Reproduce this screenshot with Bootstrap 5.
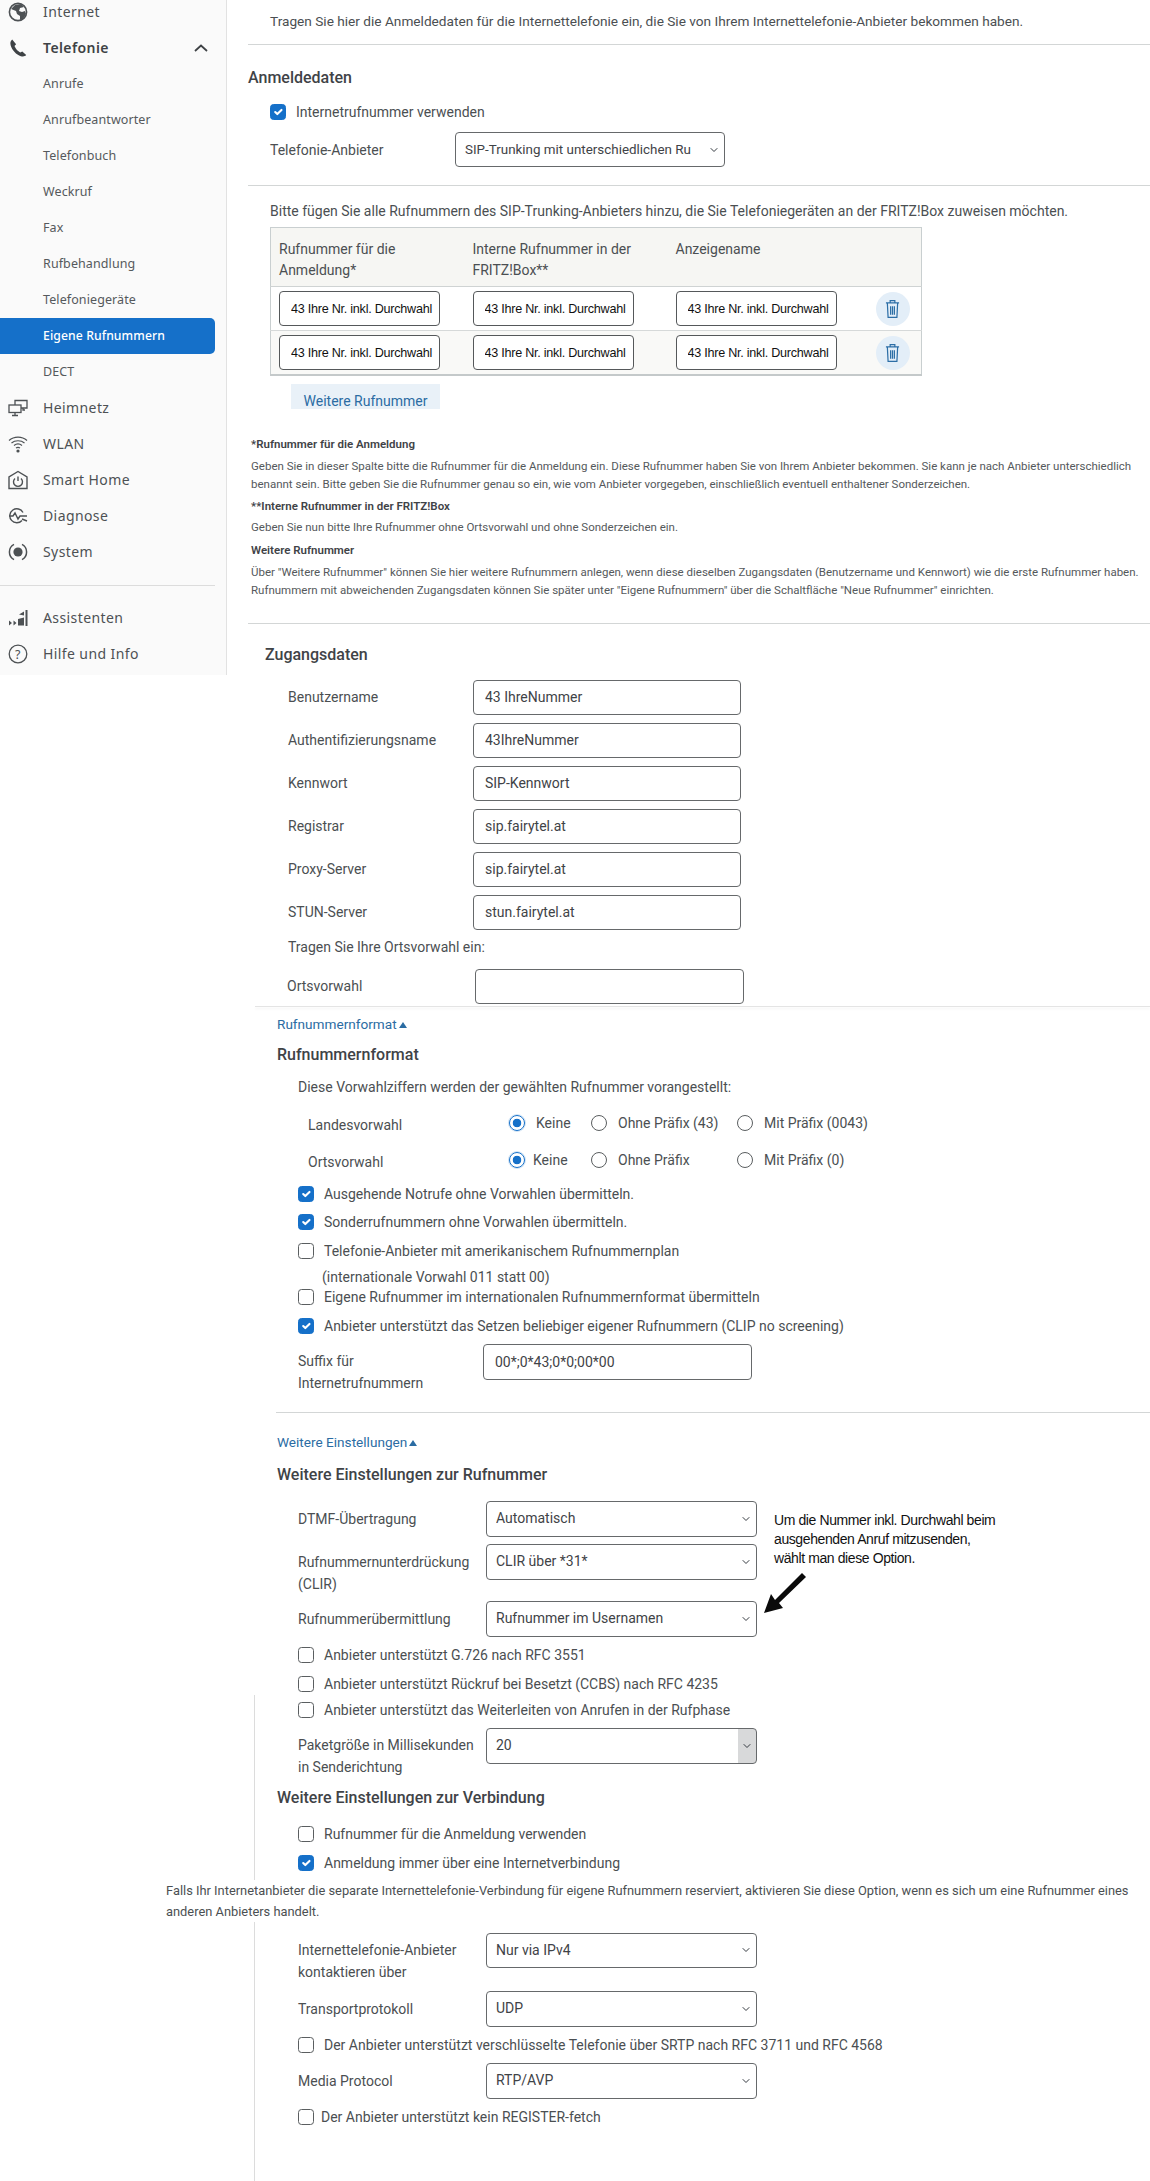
<!DOCTYPE html>
<html lang="de">
<head>
<meta charset="utf-8">
<title>Eigene Rufnummern</title>
<link href="https://cdn.jsdelivr.net/npm/bootstrap@5.3.0/dist/css/bootstrap.min.css" rel="stylesheet">
<style>
body{font-family:Roboto,"Noto Sans",sans-serif;font-size:14px;line-height:22px;color:#4b4f52;background:#fff;height:2181px;overflow:hidden}
/* sidebar */
.sidepane{width:227px;height:675px;flex:none;background:#fafafa;border-right:1px solid #e2e2e2;overflow:hidden;font-family:"Noto Sans",sans-serif}
.sidelist{margin-top:-6px}
.sideitem{height:36px;display:flex;align-items:center;width:215px;color:#55595c;font-size:12.5px;padding-left:43px;letter-spacing:.1px;text-decoration:none}
.sideitem.top{font-size:14px;padding-left:8px;letter-spacing:.4px;color:#4d5154}
.sideitem.top svg{width:20px;height:20px;margin-right:15px;flex:none}
.sideitem.open{font-weight:600;color:#3e4245}
.sideitem.act{background:#1570c9;color:#fff;font-weight:500;font-size:12.2px;border-radius:0 5px 5px 0}
.chev{width:14px!important;height:8px!important;margin:0 7px 0 auto!important}
.siderule{margin:15px 0 14px;width:215px;border:0;border-top:1px solid #dcdcdc;opacity:1}
/* main */
.mainpane{flex:1;min-width:0;position:relative}
.rule{border:0;border-top:1px solid #d3d6d6;opacity:1;margin-bottom:0}
.rule.soft{box-shadow:0 2px 3px rgba(0,0,0,.07);border-top-color:#e4e4e4}
.head{font-weight:500;font-size:16px;color:#3f4347;line-height:22px}
.linkish{color:#2b6ca3;line-height:22px;text-decoration:none;display:block;font-size:13.6px}
.linkish i{display:inline-block;width:0;height:0;margin-left:2px;vertical-align:1px;border-left:4px solid transparent;border-right:4px solid transparent;border-bottom:6px solid #2b6ca3}
.rowline{display:flex;align-items:center;height:22px;white-space:nowrap}
.rowline .form-check-input{flex:none;margin:0 10px 0 0}
.rowline.tightlab .form-check-input{margin-right:7px}
.plain{white-space:nowrap}
.intro{font-size:13.65px}
.h20{height:20px}
.form-check-input{width:16px;height:16px;border:1px solid #5a5e60;border-radius:3px;background-color:#fff}
.form-check-input:checked{background-color:#1570c9;border-color:#1570c9}
.form-check-input[type=radio]{border-radius:50%}
.form-check-input[type=radio]:checked{background:radial-gradient(circle,#1570c9 0 4px,#fff 4.6px);border-color:#1570c9;box-shadow:0 0 0 1px #cfe2f4}
.fld{height:35px;border:1px solid #66696b;border-radius:4px;font-size:14px;color:#3f4347;padding:0 11px;line-height:33px;flex:none;box-shadow:none}
.fld.tall{height:36px}
.form-select.fld{padding:0 20px 0 9px;background-size:8px 8px;background-position:right 6px center}
.form-select.fld.narrowtext{font-size:13.4px}
.form-select.greyend{background-image:var(--bs-form-select-bg-img),linear-gradient(#d8d9da,#d8d9da);background-size:8px 8px,18px 100%;background-position:right 5px center,right center;background-repeat:no-repeat}
.flabel{flex:none}
.formrow{display:flex;align-items:center}
.formrow.topal{align-items:flex-start}
.w185{width:185px}.w188{width:188px}
.w268{width:268px}.w269{width:269px}.w270{width:270px}.w271{width:271px}
.drop6{margin-top:6px}.drop7{margin-top:7px}
/* number table */
.numtable{table-layout:fixed;width:651px;border-collapse:collapse;border:1px solid #c9cfd0;border-bottom:2px solid #c4c9ca;margin:0;--bs-table-bg:transparent}
.numtable th{font-weight:400;background:#f6f6f3;height:58px;padding:11px 8px 5px;vertical-align:top;line-height:21px;color:#4b4f52;border-bottom:1px solid #cfd3d3}
.numtable td{padding:4px 8px;height:44px;border-bottom:1px solid #d6d9d9;vertical-align:middle}
.numtable tr.alt td{background:#f9f9f7;border-bottom:0}
.c1{width:194px}.c2{width:203px}.c3{width:177px}.c4{width:77px}
.numin{width:161px;height:35px;border:1px solid #55585a;border-radius:4px;font-family:"Liberation Sans",Arial,sans-serif;font-size:12.6px;letter-spacing:-.25px;color:#111;padding:0 0 0 11px;box-shadow:none}
.trashbtn{width:34px;height:34px;border-radius:50%;background:#e3eef8;display:flex;align-items:center;justify-content:center;margin-left:31px}
.trashbtn svg{width:15px;height:20px}
.addbtn{width:149px;height:25px;overflow:hidden;background:#e9f1f8;color:#2b6ca3;border:0;border-radius:0;padding:9px 0 0;font-size:14px;line-height:16px;text-align:center;display:block}
/* footnotes */
.notes{font-size:11.5px;color:#55595c;white-space:nowrap}
.notes b{font-weight:600;color:#3f4347;display:block;line-height:18px}
.notes p{margin-bottom:0;line-height:17.5px}
.notes p.wide{line-height:18px}
/* offsets */
.x21{margin-left:21px}.x24{margin-left:24px}.x28{margin-left:28px}.x38{margin-left:38px}.x43{margin-left:43px}.x50{margin-left:50px}
.x60{margin-left:60px}.x61{margin-left:61px}.x64{margin-left:64px}.x71{margin-left:71px}.x81{margin-left:81px}.x95{margin-left:95px}
.x49{margin-left:49px}
.sp2{margin-top:2px}.sp4{margin-top:4px}.sp5{margin-top:5px}.sp6{margin-top:6px}.sp7{margin-top:7px}.sp8{margin-top:8px}
.sp9{margin-top:9px}.sp10{margin-top:10px}.sp11{margin-top:11px}.sp12{margin-top:12px}.sp13{margin-top:13px}.sp14{margin-top:14px}.sp15{margin-top:15px}
.sp18{margin-top:18px}.sp20{margin-top:20px}.sp22{margin-top:22px}.sp24{margin-top:24px}.sp26{margin-top:26px}
.radiobox{display:flex;align-items:center;height:22px;position:relative;white-space:nowrap}
.radiolab{width:201px;flex:none;padding-top:4px}
.opt{display:flex;align-items:center;flex:none}
.opt .form-check-input{margin:0;flex:none}
.o1{width:82px}.o2{width:146px}
.o1 .form-check-input{margin-right:11px}.o2 .form-check-input{margin-right:11px}.o3 .form-check-input{margin-right:11px}
.o1.tight .form-check-input{margin-right:8px}
/* annotation and line */
.selbox{position:relative}
.memo{position:absolute;left:547px;top:10px;font-family:"Liberation Sans",Arial,sans-serif;font-size:14px;line-height:19px;color:#111;letter-spacing:-.4px;white-space:nowrap}
.memoarrow{position:absolute;left:535px;top:69px;width:46px;height:44px}
.vline{margin-left:27px;border-left:1px solid #dcdcdc;padding:4px 0 57px}
.vin{margin-left:-28px}
.overtext{margin-left:-61px;background:#fff;position:relative;line-height:21px;white-space:nowrap;font-size:12.87px;width:966px}
</style>
</head>
<body>
<div class="d-flex">
  <aside class="sidepane">
    <nav class="sidelist">
      <a class="sideitem top" href="#"><svg viewBox="0 0 20 20" fill="none" stroke="#4d5154" stroke-width="1.6"><circle cx="10" cy="10" r="8.6"/><path fill="#4d5154" stroke="none" d="M3 7l4-4 6-1 3 3-4 1-1 3 3 1 3-1 1 3-3 5-3 1v-4l-3-2-1-3z"/></svg>Internet</a>
      <a class="sideitem top open" href="#"><svg viewBox="0 0 20 20" fill="#3e4245"><path d="M4.2 1.6C2.4 3 2 5 2.7 7.4c1.4 4.6 5.6 9.2 10.2 10.8 2 .7 4 .4 5.3-1.1l-3.9-3.7-2.1 1.1C10 13.500 7.600 10.900 6.500 8.100l1.600-1.900z"/></svg>Telefonie<svg class="chev" viewBox="0 0 14 8" fill="none" stroke="#3e4245" stroke-width="1.8"><path d="M1 7l6-5.500 6 5.500"/></svg></a>
      <a class="sideitem" href="#">Anrufe</a>
      <a class="sideitem" href="#">Anrufbeantworter</a>
      <a class="sideitem" href="#">Telefonbuch</a>
      <a class="sideitem" href="#">Weckruf</a>
      <a class="sideitem" href="#">Fax</a>
      <a class="sideitem" href="#">Rufbehandlung</a>
      <a class="sideitem" href="#">Telefoniegeräte</a>
      <a class="sideitem act" href="#">Eigene Rufnummern</a>
      <a class="sideitem" href="#">DECT</a>
      <a class="sideitem top" href="#"><svg viewBox="0 0 20 20" fill="none" stroke="#4d5154" stroke-width="1.3"><path d="M7 7V2.500h12V10h-6"/><rect x="1" y="7" width="12" height="7.500"/><path d="M7 14.500V17M4 17.500h6M15 10v2h2"/></svg>Heimnetz</a>
      <a class="sideitem top" href="#"><svg viewBox="0 0 20 20" fill="none" stroke="#4d5154" stroke-width="1.200"><path d="M1 6.500c5-4.500 13-4.500 18 0M3.500 9c3.500-3 9.500-3 13 0M6 11.500c2.300-1.800 5.700-1.800 8 0"/><path d="M8 14c1.200-.8 2.800-.8 4 0"/><circle cx="10" cy="17" r="1.600" fill="#4d5154" stroke="none"/></svg>WLAN</a>
      <a class="sideitem top" href="#"><svg viewBox="0 0 20 20" fill="none" stroke="#4d5154" stroke-width="1.400"><path d="M1 18.500V7l9-5.500L19 7v11.500z"/><path d="M7 8.500a4.500 4.500 0 1 0 6 0M10 6.500V11"/></svg>Smart Home</a>
      <a class="sideitem top" href="#"><svg viewBox="0 0 20 20" fill="none" stroke="#4d5154" stroke-width="1.400"><path d="M14 14.500a7 7 0 1 1 1-8"/><path d="M1 10h4l2-3 3 6 2-3h3M14 13l5 2M15 10h4"/></svg>Diagnose</a>
      <a class="sideitem top" href="#"><svg viewBox="0 0 20 20" fill="none" stroke="#4d5154" stroke-width="1.500"><circle cx="10" cy="10" r="4.600" fill="#4d5154" stroke="none"/><path d="M6 2.400a8.600 8.600 0 0 0 0 15.200M14 2.400a8.600 8.600 0 0 1 0 15.200"/></svg>System</a>
      <hr class="siderule">
      <a class="sideitem top" href="#"><svg viewBox="0 0 20 20" fill="#4d5154"><path d="M1 12.500l3 2.500-3 2.500zM5.500 12.500l3 2.500-3 2.500z"/><path d="M10 11l6-1.500v8H10zM11 6.500l5-3v4z"/><rect x="17.500" y="2" width="2" height="16"/></svg>Assistenten</a>
      <a class="sideitem top" href="#"><svg viewBox="0 0 20 20" fill="none" stroke="#4d5154" stroke-width="1.300"><circle cx="10" cy="10" r="8.800"/><text x="10" y="14.500" text-anchor="middle" font-size="12.500" font-family="Noto Sans" fill="#4d5154" stroke="none">?</text></svg>Hilfe und Info</a>
    </nav>
  </aside>

  <main class="mainpane">
    <div class="x43 sp10 plain intro">Tragen Sie hier die Anmeldedaten für die Internettelefonie ein, die Sie von Ihrem Internettelefonie-Anbieter bekommen haben.</div>
    <hr class="rule x21 sp12">
    <div class="head x21 sp22">Anmeldedaten</div>
    <label class="rowline x43 sp12"><input class="form-check-input" type="checkbox" checked>Internetrufnummer verwenden</label>
    <div class="formrow x43 sp9"><span class="flabel w185">Telefonie-Anbieter</span>
      <select class="form-select fld w270 narrowtext"><option>SIP-Trunking mit unterschiedlichen Ru</option></select></div>
    <hr class="rule x21 sp18">
    <div class="x43 sp14 plain">Bitte fügen Sie alle Rufnummern des SIP-Trunking-Anbieters hinzu, die Sie Telefoniegeräten an der FRITZ!Box zuweisen möchten.</div>
    <div class="x43 sp5">
      <table class="table numtable">
        <thead><tr><th class="c1">Rufnummer für die<br>Anmeldung*</th><th class="c2">Interne Rufnummer in der<br>FRITZ!Box**</th><th class="c3">Anzeigename</th><th class="c4"></th></tr></thead>
        <tbody>
          <tr><td><input class="form-control numin" value="43 Ihre Nr. inkl. Durchwahl"></td><td><input class="form-control numin" value="43 Ihre Nr. inkl. Durchwahl"></td><td><input class="form-control numin" value="43 Ihre Nr. inkl. Durchwahl"></td><td class="p-0"><span class="trashbtn"><svg viewBox="0 0 16 21" fill="none" stroke="#2c6ea6" stroke-width="1.300"><path d="M1 4h14M5.500 4V1.500h5V4M2.500 4l.8 15.500h9.400L13.500 4M6 7.500v9M8 7.500v9M10 7.500v9"/></svg></span></td></tr>
          <tr class="alt"><td><input class="form-control numin" value="43 Ihre Nr. inkl. Durchwahl"></td><td><input class="form-control numin" value="43 Ihre Nr. inkl. Durchwahl"></td><td><input class="form-control numin" value="43 Ihre Nr. inkl. Durchwahl"></td><td class="p-0"><span class="trashbtn"><svg viewBox="0 0 16 21" fill="none" stroke="#2c6ea6" stroke-width="1.300"><path d="M1 4h14M5.500 4V1.500h5V4M2.500 4l.8 15.500h9.400L13.500 4M6 7.500v9M8 7.500v9M10 7.500v9"/></svg></span></td></tr>
        </tbody>
      </table>
    </div>
    <button class="btn addbtn x64 sp8" type="button">Weitere Rufnummer</button>
    <div class="notes x24 sp26">
      <b>*Rufnummer für die Anmeldung</b>
      <p class="sp5">Geben Sie in dieser Spalte bitte die Rufnummer für die Anmeldung ein. Diese Rufnummer haben Sie von Ihrem Anbieter bekommen. Sie kann je nach Anbieter unterschiedlich<br>benannt sein. Bitte geben Sie die Rufnummer genau so ein, wie vom Anbieter vorgegeben, einschließlich eventuell enthaltener Sonderzeichen.</p>
      <b class="sp4">**Interne Rufnummer in der FRITZ!Box</b>
      <p class="sp4">Geben Sie nun bitte Ihre Rufnummer ohne Ortsvorwahl und ohne Sonderzeichen ein.</p>
      <b class="sp4">Weitere Rufnummer</b>
      <p class="wide sp4">Über "Weitere Rufnummer" können Sie hier weitere Rufnummern anlegen, wenn diese dieselben Zugangsdaten (Benutzername und Kennwort) wie die erste Rufnummer haben.<br>Rufnummern mit abweichenden Zugangsdaten können Sie später unter "Eigene Rufnummern" über die Schaltfläche "Neue Rufnummer" einrichten.</p>
    </div>
    <hr class="rule x21 sp24">
    <div class="head x38 sp20">Zugangsdaten</div>
    <div class="formrow x61 sp14"><span class="flabel w185">Benutzername</span><input class="form-control fld w268" value="43 IhreNummer"></div>
    <div class="formrow x61 sp8"><span class="flabel w185">Authentifizierungsname</span><input class="form-control fld w268" value="43IhreNummer"></div>
    <div class="formrow x61 sp8"><span class="flabel w185">Kennwort</span><input class="form-control fld w268" value="SIP-Kennwort"></div>
    <div class="formrow x61 sp8"><span class="flabel w185">Registrar</span><input class="form-control fld w268" value="sip.fairytel.at"></div>
    <div class="formrow x61 sp8"><span class="flabel w185">Proxy-Server</span><input class="form-control fld w268" value="sip.fairytel.at"></div>
    <div class="formrow x61 sp8"><span class="flabel w185">STUN-Server</span><input class="form-control fld w268" value="stun.fairytel.at"></div>
    <div class="x61 sp6 plain">Tragen Sie Ihre Ortsvorwahl ein:</div>
    <div class="formrow x60 sp11"><span class="flabel w188">Ortsvorwahl</span><input class="form-control fld w269"></div>
    <hr class="rule soft x28 sp2">
    <a class="linkish x50 sp6" href="#">Rufnummernformat<i></i></a>
    <div class="head x50 sp9">Rufnummernformat</div>
    <div class="x71 sp10 plain">Diese Vorwahlziffern werden der gewählten Rufnummer vorangestellt:</div>
    <div class="radiobox x81 sp14"><span class="radiolab">Landesvorwahl</span>
      <label class="opt o1"><input class="form-check-input" type="radio" name="lv" checked>Keine</label>
      <label class="opt o2"><input class="form-check-input" type="radio" name="lv">Ohne Präfix (43)</label>
      <label class="opt o3"><input class="form-check-input" type="radio" name="lv">Mit Präfix (0043)</label></div>
    <div class="radiobox x81 sp15"><span class="radiolab">Ortsvorwahl</span>
      <label class="opt o1 tight"><input class="form-check-input" type="radio" name="ov" checked>Keine</label>
      <label class="opt o2"><input class="form-check-input" type="radio" name="ov">Ohne Präfix</label>
      <label class="opt o3"><input class="form-check-input" type="radio" name="ov">Mit Präfix (0)</label></div>
    <label class="rowline x71 sp12"><input class="form-check-input" type="checkbox" checked>Ausgehende Notrufe ohne Vorwahlen übermitteln.</label>
    <label class="rowline x71 sp6"><input class="form-check-input" type="checkbox" checked>Sonderrufnummern ohne Vorwahlen übermitteln.</label>
    <label class="rowline x71 sp7"><input class="form-check-input" type="checkbox">Telefonie-Anbieter mit amerikanischem Rufnummernplan</label>
    <div class="x95 sp4 plain h20">(internationale Vorwahl 011 statt 00)</div>
    <label class="rowline x71"><input class="form-check-input" type="checkbox">Eigene Rufnummer im internationalen Rufnummernformat übermitteln</label>
    <label class="rowline x71 sp7"><input class="form-check-input" type="checkbox" checked>Anbieter unterstützt das Setzen beliebiger eigener Rufnummern (CLIP no screening)</label>
    <div class="formrow topal x71 sp7"><span class="flabel w185 drop6">Suffix für<br>Internetrufnummern</span><input class="form-control fld tall w269" value="00*;0*43;0*0;00*00"></div>
    <hr class="rule x49 sp18">
    <a class="linkish x50 sp18" href="#">Weitere Einstellungen<i></i></a>
    <div class="head x50 sp11">Weitere Einstellungen zur Rufnummer</div>
    <div class="selbox sp15">
      <div class="formrow x71"><span class="flabel w188">DTMF-Übertragung</span><select class="form-select fld tall w271"><option>Automatisch</option></select></div>
      <div class="formrow topal x71 sp7"><span class="flabel w188 drop7">Rufnummernunterdrückung<br>(CLIR)</span><select class="form-select fld tall w271"><option>CLIR über *31*</option></select></div>
      <div class="formrow x71 sp6"><span class="flabel w188">Rufnummerübermittlung</span><select class="form-select fld tall w271"><option>Rufnummer im Usernamen</option></select></div>
      <div class="memo">Um die Nummer inkl. Durchwahl beim<br>ausgehenden Anruf mitzusenden,<br>wählt man diese Option.</div>
      <svg class="memoarrow" viewBox="0 0 46 44" fill="#0a0a0a"><path d="M40 3l4 4-27 26 4 5-19 5 7-19 4 6z"/></svg>
    </div>
    <label class="rowline x71 sp7"><input class="form-check-input" type="checkbox">Anbieter unterstützt G.726 nach RFC 3551</label>
    <label class="rowline x71 sp7"><input class="form-check-input" type="checkbox">Anbieter unterstützt Rückruf bei Besetzt (CCBS) nach RFC 4235</label>
    <div class="vline"><div class="vin">
      <label class="rowline x71"><input class="form-check-input" type="checkbox">Anbieter unterstützt das Weiterleiten von Anrufen in der Rufphase</label>
      <div class="formrow topal x71 sp7"><span class="flabel w188 drop6">Paketgröße in Millisekunden<br>in Senderichtung</span><select class="form-select fld tall w271 greyend"><option>20</option></select></div>
      <div class="head x50 sp9">Weitere Einstellungen zur Verbindung</div>
      <label class="rowline x71 sp14"><input class="form-check-input" type="checkbox">Rufnummer für die Anmeldung verwenden</label>
      <label class="rowline x71 sp7"><input class="form-check-input" type="checkbox" checked>Anmeldung immer über eine Internetverbindung</label>
      <div class="overtext sp6">Falls Ihr Internetanbieter die separate Internettelefonie-Verbindung für eigene Rufnummern reserviert, aktivieren Sie diese Option, wenn es sich um eine Rufnummer eines<br>anderen Anbieters handelt.</div>
      <div class="formrow topal x71 sp11"><span class="flabel w188 drop6">Internettelefonie-Anbieter<br>kontaktieren über</span><select class="form-select fld w271"><option>Nur via IPv4</option></select></div>
      <div class="formrow x71 sp8"><span class="flabel w188">Transportprotokoll</span><select class="form-select fld tall w271"><option>UDP</option></select></div>
      <label class="rowline x71 sp7"><input class="form-check-input" type="checkbox">Der Anbieter unterstützt verschlüsselte Telefonie über SRTP nach RFC 3711 und RFC 4568</label>
      <div class="formrow x71 sp7"><span class="flabel w188">Media Protocol</span><select class="form-select fld tall w271"><option>RTP/AVP</option></select></div>
      <label class="rowline x71 sp7 tightlab"><input class="form-check-input" type="checkbox">Der Anbieter unterstützt kein REGISTER-fetch</label>
    </div></div>
  </main>
</div>
<script src="https://cdn.jsdelivr.net/npm/bootstrap@5.3.0/dist/js/bootstrap.bundle.min.js"></script>
</body>
</html>
